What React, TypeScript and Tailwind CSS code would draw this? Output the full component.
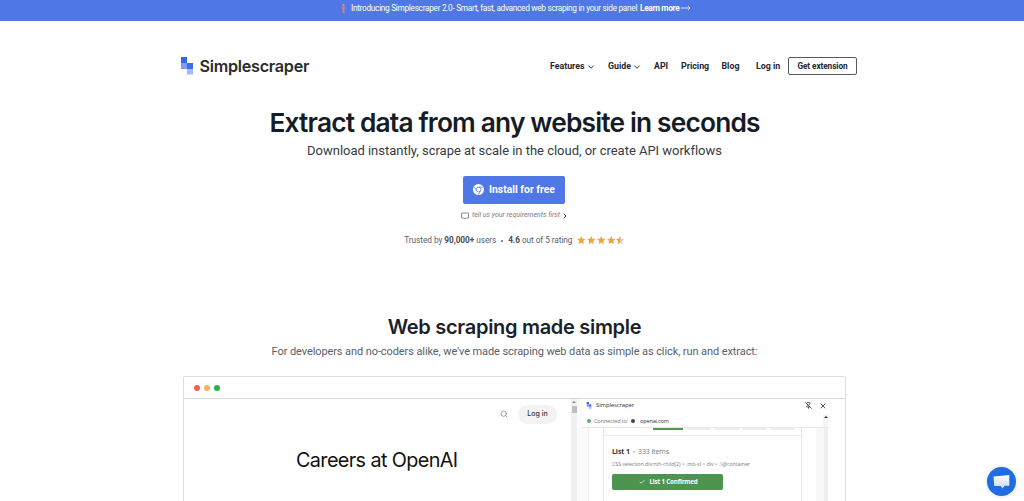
import React from 'react';
import { ChevronDown, ChevronRight, Search, Check, X, PinOff } from 'lucide-react';

const navItems = [
  { label: 'Features', menu: true, width: 'w-[58px]' },
  { label: 'Guide', menu: true, width: 'w-[46px]' },
  { label: 'API', menu: false, width: 'w-[27px]' },
  { label: 'Pricing', menu: false, width: 'w-[40.5px]' },
  { label: 'Blog', menu: false, width: 'w-[34.5px]' },
  { label: 'Log in', menu: false, width: 'w-[32px]' },
];

const Logo: React.FC<{ className?: string }> = ({ className }) => (
  <svg className={className} viewBox="0 0 12 18">
    <rect x="0" y="0" width="6" height="6" fill="#3565e8" />
    <rect x="0" y="6" width="6" height="6" fill="#7d9cf2" />
    <rect x="6" y="6" width="6" height="6" fill="#3f6cec" />
    <rect x="6" y="12" width="6" height="5.5" fill="#a3b9f8" />
  </svg>
);

const ChromeIcon = () => (
  <svg className="mb-px h-[11px] w-[11px] shrink-0" viewBox="0 0 22 22">
    <circle cx="11" cy="11" r="11" fill="#fff" />
    <circle cx="11" cy="11" r="4.7" fill="#fff" stroke="#4f77e6" strokeWidth="1.4" />
    <path d="M11 6.3h9.5M6.9 13.3 2.2 5.2M15.1 13.3l-4.7 8.2" stroke="#4f77e6" strokeWidth="1.4" />
  </svg>
);

const Star: React.FC<{ half?: boolean }> = ({ half }) => {
  const path = 'M8 0l2.3 5.3 5.7.5-4.3 3.8 1.3 5.7L8 12.3l-5 3 1.3-5.7L0 5.8l5.7-.5z';
  return (
    <svg className="h-[8.5px] w-[8.5px]" viewBox="0 0 16 16">
      <path d={path} fill={half ? '#d5d3d0' : '#f2a33a'} />
      {half && <path d="M8 0v12.3l-5 3 1.3-5.7L0 5.8l5.7-.5z" fill="#f2a33a" />}
    </svg>
  );
};

const Banner = () => (
  <div className="flex h-[20.5px] bg-[#4f77e6] pl-[341px] text-[8.3px] leading-[16px] tracking-[-0.31px] whitespace-nowrap text-white">
    <svg className="mt-[4px] mr-[5px] h-[9px] w-[5px]" viewBox="0 0 5 9">
      <circle cx="2.5" cy="1.2" r="1.1" fill="#d99a86" />
      <path d="M.8 2.6h3.4v2.8H3.5V9h-2V5.4H.8z" fill="#b98499" />
    </svg>
    <span className="w-[289px]">Introducing Simplescraper 2.0- Smart, fast, advanced web scraping in your side panel</span>
    <span className="font-bold">Learn more</span>
    <svg className="mt-[5px] ml-[2px] h-[6px] w-[10px]" viewBox="0 0 10 6" fill="none" stroke="#fff" strokeWidth=".8">
      <path d="M0 3h9M7 1l2 2-2 2" />
    </svg>
  </div>
);

const Header = () => (
  <header className="flex h-[91px] items-center pl-[181px] text-[#23272f]">
    <Logo className="h-[18px] w-[12px]" />
    <span className="ml-[6.5px] w-[350.5px] font-[Inter] text-[16.2px] font-semibold tracking-[-0.28px] text-[#2b2b2d]">
      Simplescraper
    </span>
    {navItems.map((item) => (
      <div key={item.label} className={`${item.width} flex shrink-0 items-center pt-[1px] text-[8.8px] font-bold whitespace-nowrap`}>
        {item.label}
        {item.menu && <ChevronDown className="ml-[1px] h-[10px] w-[10px] shrink-0" strokeWidth={2.2} />}
      </div>
    ))}
    <button className="flex h-[18px] w-[69px] shrink-0 items-center justify-center rounded-[2px] border border-[#555962] text-[8.3px] font-bold tracking-[-0.1px]">
      Get extension
    </button>
  </header>
);

const Hero = () => (
  <section className="flex h-[196px] flex-col items-center pl-[5px]">
    <h1 className="h-[26px] font-[Inter] text-[26.3px] leading-[21px] font-semibold tracking-[-0.82px] whitespace-nowrap text-[#161c26]">
      Extract data from any website in seconds
    </h1>
    <p className="mt-[5px] h-[16px] text-[13px] leading-[15px] tracking-[-0.02px] whitespace-nowrap text-[#363b42]">
      Download instantly, scrape at scale in the cloud, or create API workflows
    </p>
    <button className="mt-[17.5px] mr-[1px] flex h-[28px] w-[102px] items-center justify-center gap-[5px] rounded-[2px] bg-[#4f77e6] text-[10.4px] font-bold text-white">
      <ChromeIcon />
      Install for free
    </button>
    <div className="mt-[6.5px] ml-[1px] flex h-[10px] items-center text-[7px] whitespace-nowrap text-[#777b82] italic">
      <svg className="mr-[3px] h-[8px] w-[8px]" viewBox="0 0 16 16" fill="none" stroke="#777b82" strokeWidth="1.7">
        <path d="M1 2h14v10H10l-2 2-2-2H1z" />
      </svg>
      tell us your requirements first
      <ChevronRight className="ml-[1px] h-[8px] w-[8px] text-[#444]" strokeWidth={3} />
    </div>
    <div className="mt-[14px] flex h-[12px] items-center text-[8.3px] tracking-[-0.07px] whitespace-nowrap text-[#5c6067]">
      <span>Trusted by <b className="text-[#4a4d54]">90,000+</b> users</span>
      <span className="mx-[5px] h-[2px] w-[2px] rounded-full bg-[#5c6067]" />
      <span><b className="text-[#4a4d54]">4.6</b> out of 5 rating</span>
      <span className="ml-[5px] flex gap-[1.2px]">
        <Star /><Star /><Star /><Star /><Star half />
      </span>
    </div>
  </section>
);

const CareersPage = () => (
  <div className="w-[387px] shrink-0 font-[Inter]">
    <div className="mt-[5px] flex h-[20px] items-center pl-[316px]">
      <Search className="h-[8px] w-[8px] text-[#777]" />
      <span className="ml-[10px] flex h-[19px] w-[39px] items-center justify-center rounded-full bg-[#f3f3f3] text-[7px] font-medium text-[#333]">
        Log in
      </span>
    </div>
    <div className="mt-[22px] pl-[112px] text-[19.8px] leading-[28px] tracking-[-0.6px] whitespace-nowrap text-[#111]">
      Careers at OpenAI
    </div>
  </div>
);

const SidePanel = () => (
  <div className="w-[247px] shrink-0 font-['Open_Sans'] text-[#333]">
    <div className="flex h-[13px] items-center pl-[4px] text-[6px]">
      <Logo className="mr-[4px] h-[7px] w-[6px]" />
      <span className="w-[209px] tracking-[-0.15px]">Simplescraper</span>
      <PinOff className="h-[7px] w-[7px] shrink-0" strokeWidth={2.5} />
      <X className="ml-[7px] h-[8px] w-[8px] shrink-0" strokeWidth={2.5} />
    </div>
    <div className="flex h-[16px] border-b border-[#e8eaea] pl-[5px] text-[5.6px] tracking-[-0.18px] whitespace-nowrap">
      <div className="flex grow items-center pt-[3px]">
        <span className="h-[4px] w-[4px] rounded-full bg-[#63a868]" />
        <span className="ml-[3px] w-[37px] text-[#777]">Connected to:</span>
        <span className="mr-[5px] h-[4px] w-[4px] rounded-full bg-[#444]" />
        openai.com
      </div>
      <span className="mt-[2px] mr-[1px] flex w-[5px] justify-center bg-[#f5f5f5] pt-[2px]">
        <span className="h-0 border-x-[2px] border-b-[2.5px] border-x-transparent border-b-[#333]" />
      </span>
    </div>
    <div className="flex h-[74px]">
      <div className="w-[7px] border-r border-[#ececee] bg-[#fafafa]" />
      <div className="w-[14px]" />
      <div className="w-[199px] border-x border-[#e6e8e8]">
        <div className="flex h-[8px] gap-[4px] border-b border-[#eaecec] pl-[49px]">
          <div className="h-[2px] w-[30px] bg-[#4f9a50]" />
          <div className="h-[1.5px] w-[24px] bg-[#ececec]" />
          <div className="h-[1.5px] w-[24px] bg-[#ececec]" />
          <div className="h-[1.5px] w-[24px] bg-[#ececec]" />
          <div className="h-[1.5px] w-[24px] bg-[#ececec]" />
        </div>
        <div className="pt-[9px] pl-[8px]">
          <div className="h-[13.5px] text-[7px] leading-[14px] tracking-[-0.1px] whitespace-nowrap text-[#777]">
            <b className="text-[#333]">List 1</b>
            <span className="mx-[3.2px] text-[5px]">•</span>
            333 items
          </div>
          <div className="h-[10.5px] text-[5.4px] leading-[11px] tracking-[-0.11px] whitespace-nowrap text-[#808080]">
            CSS selection div:nth-child(2) &gt; .mb-xl &gt; div &gt; .\@container
          </div>
          <div className="mt-[5px] flex h-[16px] w-[111px] items-center justify-center gap-[4px] rounded-[2px] bg-[#4c944f] pl-[2px] text-[6.2px] font-bold tracking-[-0.15px] text-white">
            <Check className="h-[6px] w-[6px]" strokeWidth={3} />
            List 1 Confirmed
          </div>
        </div>
      </div>
      <div className="w-[14px]" />
      <div className="w-[8px] bg-[#f8f8f8]" />
      <div className="w-[4px] bg-[#eeeeee]" />
    </div>
  </div>
);

const BrowserDemo = () => (
  <div className="ml-[183px] h-[126px] w-[663px] overflow-hidden rounded-t-[2px] border border-b-0 border-[#dcdfe0] bg-white">
    <div className="flex h-[22px] items-center gap-[4px] border-b border-[#d5d8d9] pl-[10px]">
      <span className="h-[6px] w-[6px] rounded-full bg-[#ed6158]" />
      <span className="h-[6px] w-[6px] rounded-full bg-[#f3b94e]" />
      <span className="h-[6px] w-[6px] rounded-full bg-[#25b14c]" />
    </div>
    <div className="flex h-[103px]">
      <CareersPage />
      <div className="flex w-[6px] shrink-0 flex-col items-center bg-[#f0f0f0]">
        <span className="mt-[2px] border-x-[2px] border-b-[2px] border-x-transparent border-b-[#888]" />
        <span className="mt-[3px] h-[7px] w-[5px] bg-[#bebebe]" />
      </div>
      <div className="w-[5px] shrink-0 bg-[#fbfbfb]" />
      <SidePanel />
    </div>
  </div>
);

const ChatButton = () => (
  <button className="fixed right-[8px] bottom-[5px] flex h-[29px] w-[29px] items-center justify-center rounded-full bg-[#1f6de2] shadow-[0_0_4px_rgba(0,0,0,0.15)]">
    <svg className="h-[15px] w-[17px]" viewBox="0 0 17 15">
      <defs>
        <linearGradient id="bubble" x1="0" y1="0" x2="0" y2="1">
          <stop offset="0" stopColor="#fff" />
          <stop offset="1" stopColor="#c9dbf8" />
        </linearGradient>
      </defs>
      <path d="M.5 2.4 16.3 1v10.8h-4.8L9.6 14.4l-2-2.4H1.2z" fill="url(#bubble)" />
    </svg>
  </button>
);

const App: React.FC = () => {
  return (
    <div className="h-[501px] w-[1024px] overflow-hidden bg-white font-[Roboto,sans-serif]">
      <Banner />
      <Header />
      <Hero />
      <section className="flex h-[68.5px] flex-col items-center pt-[7px] pl-[5px]">
        <h2 className="h-[26px] font-[Inter] text-[20px] leading-[25px] font-semibold tracking-[-0.3px] whitespace-nowrap text-[#1b212b]">
          Web scraping made simple
        </h2>
        <p className="mt-[3px] text-[11px] leading-[16px] tracking-[-0.09px] whitespace-nowrap text-[#5a6069]">
          For developers and no-coders alike, we've made scraping web data as simple as click, run and extract:
        </p>
      </section>
      <BrowserDemo />
      <ChatButton />
    </div>
  );
};

export default App;
